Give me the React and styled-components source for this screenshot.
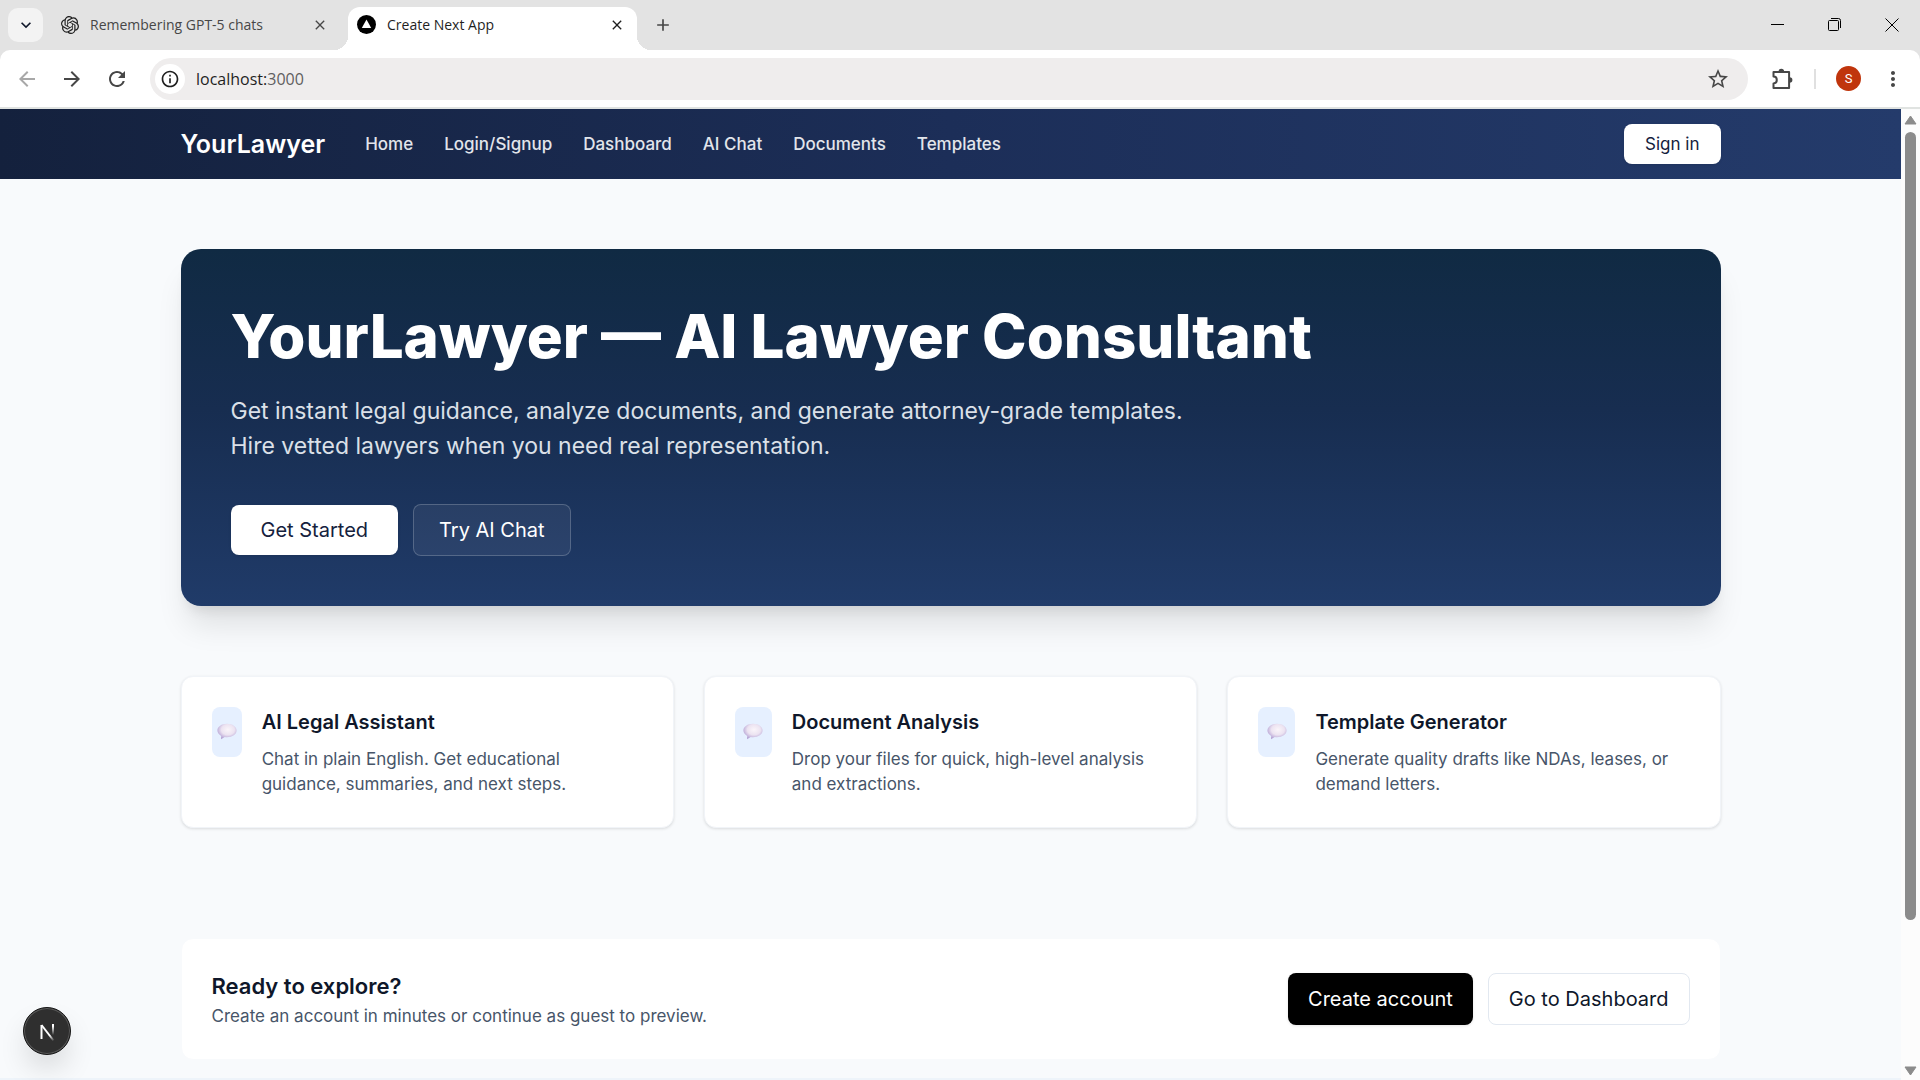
import React from "react";
import styled, { createGlobalStyle } from "styled-components";
import { SiOpenai } from "react-icons/si";
import {
  MdArrowBack,
  MdArrowForward,
  MdRefresh,
  MdInfoOutline,
  MdStarOutline,
  MdMoreVert,
  MdKeyboardArrowDown,
  MdClose,
  MdAdd,
} from "react-icons/md";

const GlobalStyle = createGlobalStyle`
  *, *::before, *::after {
    box-sizing: border-box;
  }

  body {
    margin: 0;
    font-family: Inter, "Liberation Sans", sans-serif;
    color: #0f172a;
  }

  h1, h2, h3, p {
    margin: 0;
  }

  button, input {
    font: inherit;
    color: inherit;
  }

  button {
    padding: 0;
    border: 0;
    background: none;
    cursor: pointer;
  }

  a {
    color: inherit;
    text-decoration: none;
  }
`;

const Browser = styled.div`
  height: 100vh;
  display: flex;
  flex-direction: column;
  overflow: hidden;
  background: #e3e3e3;
`;

/* ---------- browser chrome ---------- */

const TabStrip = styled.div`
  height: 50px;
  display: flex;
  align-items: center;
  padding-left: 8px;
  font-family: "Open Sans", "Noto Sans", sans-serif;
  font-size: 14px;
`;

const TabSearch = styled.button`
  width: 35px;
  height: 34px;
  display: flex;
  align-items: center;
  justify-content: center;
  border-radius: 10px;
  background: #f3f3f3;
`;

const Tab = styled.div`
  height: 43px;
  width: ${(props) => (props.$active ? 289 : 305)}px;
  display: flex;
  align-items: center;
  align-self: flex-end;
  gap: 11px;
  padding: ${(props) => (props.$active ? "0 12px 8px 9px" : "0 20px 8px 18px")};
  color: #474747;
  position: relative;

  ${(props) =>
    props.$active &&
    `
    color: #1f1f1f;
    background: white;
    border-radius: 12px 12px 0 0;

    &::before, &::after {
      content: "";
      position: absolute;
      bottom: 0;
      width: 14px;
      height: 14px;
    }
    &::before {
      right: 100%;
      background: radial-gradient(circle at 0 0, transparent 14px, white 14px);
    }
    &::after {
      left: 100%;
      background: radial-gradient(circle at 100% 0, transparent 14px, white 14px);
    }
  `}
`;

const TabTitle = styled.span`
  flex: 1;
  white-space: nowrap;
`;

const IconButton = styled.button`
  display: flex;
  align-items: center;
  justify-content: center;
  color: ${(props) => props.$color || "#474747"};
`;

const NewTab = styled(IconButton)`
  margin-left: 16px;
`;

const WindowControls = styled.div`
  margin-left: auto;
  height: 100%;
  display: flex;
`;

const WindowButton = styled(IconButton)`
  width: 57px;
  color: black;
`;

const Toolbar = styled.div`
  height: 59px;
  display: flex;
  align-items: center;
  padding: 0 15px;
  background: white;
  border-bottom: 2px solid #e0e3e1;
  border-radius: 10px 10px 0 0;
`;

const NavButtons = styled.div`
  display: flex;
  gap: 21px;
  margin-right: 21px;
`;

const AddressBar = styled.div`
  flex: 1;
  height: 42px;
  display: flex;
  align-items: center;
  padding: 0 18px 0 5px;
  border-radius: 21px;
  background: #efeded;
`;

const SiteInfo = styled(IconButton)`
  width: 30px;
  height: 30px;
  border-radius: 50%;
  background: white;
`;

const Url = styled.div`
  flex: 1;
  margin-left: 11px;
  font-family: "Open Sans", "Noto Sans", sans-serif;
  font-size: 16px;
  color: #1f1f1f;

  span {
    color: #5f5f5f;
  }
`;

const ToolbarEnd = styled.div`
  display: flex;
  align-items: center;
  margin-left: 23px;
`;

const Separator = styled.div`
  width: 2px;
  height: 20px;
  margin: 0 20px 0 21px;
  background: #e0e0e0;
`;

const Avatar = styled.button`
  width: 25px;
  height: 25px;
  margin-right: 20px;
  border-radius: 50%;
  background: #c0350c;
  color: white;
  font-family: Roboto, sans-serif;
  font-size: 13px;
`;

const Viewport = styled.div`
  flex: 1;
  min-height: 0;
  display: flex;
`;

const ScrollBar = styled.div`
  width: 19px;
  display: flex;
  flex-direction: column;
  align-items: center;
  justify-content: space-between;
  padding: 6px 0 4px;
  background: #fcfcfc;
`;

const ScrollTrack = styled.div`
  flex: 1;
  width: 11px;
  margin: 7px 0;
`;

const ScrollThumb = styled.div`
  height: 85%;
  border-radius: 6px;
  background: #8b8b8b;
`;

/* ---------- page ---------- */

const Page = styled.div`
  flex: 1;
  overflow: hidden;
  position: relative;
  background: #f8fafc;
`;

const Container = styled.div`
  max-width: 1600px;
  margin: 0 auto;
  padding: 0 30px;
`;

const Header = styled.header`
  background: linear-gradient(90deg, #14213d, #1c2e58 50%, #243b6b);
`;

const HeaderRow = styled(Container)`
  height: 70px;
  display: flex;
  align-items: center;
`;

const Brand = styled.a`
  margin-right: 40px;
  font-size: 25px;
  font-weight: 600;
  color: white;
`;

const NavLinks = styled.nav`
  display: flex;
  gap: 31px;
  font-size: 17px;
  font-weight: 500;
  color: #e2e5eb;
`;

const Button = styled.button`
  padding: ${(props) => (props.$small ? "0 21px" : "0 30px")};
  height: ${(props) => (props.$small ? 40 : 50)}px;
  border-radius: 8px;
  font-size: ${(props) => (props.$small ? 17 : 20)}px;
  background: white;
  color: #14213d;
  box-shadow: 0 1px 3px rgba(0, 0, 0, 0.1);
`;

const SignIn = styled(Button)`
  margin-left: auto;
`;

const GhostButton = styled(Button)`
  height: 52px;
  padding: 0 25px;
  border: 1px solid rgba(255, 255, 255, 0.2);
  background: rgba(255, 255, 255, 0.06);
  color: white;
  box-shadow: none;
`;

const DarkButton = styled(Button)`
  height: 52px;
  padding: 0 20px;
  background: black;
  color: white;
`;

const OutlineButton = styled(Button)`
  height: 52px;
  padding: 0 20px;
  border: 1px solid #e2e8f0;
  color: #0f172a;
  box-shadow: none;
`;

const Main = styled(Container)`
  padding-top: 70px;
  padding-bottom: 18px;
`;

const Hero = styled.section`
  padding: 50px;
  border-radius: 20px;
  background: linear-gradient(180deg, #102a43, #172d50 45%, #203b69);
  box-shadow: 0 25px 31px -6px rgba(0, 0, 0, 0.1),
    0 10px 13px -7px rgba(0, 0, 0, 0.1);
  color: white;
`;

const HeroTitle = styled.h1`
  font-size: 60px;
  line-height: 75px;
  font-weight: 800;
`;

const HeroText = styled.p`
  max-width: 960px;
  margin: 20px 0 40px;
  font-size: 23px;
  line-height: 35px;
  color: #dbe0e8;
`;

const Actions = styled.div`
  display: flex;
  align-items: center;
  gap: 15px;
`;

const Features = styled.section`
  display: grid;
  grid-template-columns: repeat(3, 1fr);
  gap: 30px;
  margin-top: 70px;
`;

const Card = styled.article`
  display: flex;
  align-items: flex-start;
  gap: 20px;
  padding: 30px;
  border: 1px solid #f1f4f8;
  border-radius: 12px;
  background: white;
  box-shadow: 0 1px 3px rgba(0, 0, 0, 0.12);
`;

const CardIcon = styled.div`
  width: 48px;
  height: 50px;
  min-width: 30px;
  display: flex;
  align-items: center;
  justify-content: center;
  border-radius: 8px;
  background: #e6f0ff;
`;

const CardTitle = styled.h3`
  font-size: 20px;
  line-height: 30px;
  font-weight: 600;
`;

const CardText = styled.p`
  margin-top: 10px;
  font-size: 17px;
  line-height: 25px;
  color: #475569;
`;

const Cta = styled.section`
  display: flex;
  align-items: center;
  justify-content: space-between;
  margin-top: 110px;
  padding: 30px;
  border: 1px solid #f8fafc;
  border-radius: 12px;
  background: white;
`;

const CtaTitle = styled.h2`
  font-size: 22px;
  line-height: 35px;
  font-weight: 600;
`;

const CtaText = styled.p`
  font-size: 17px;
  line-height: 25px;
  color: #475569;
`;

const Footer = styled.footer`
  height: 80px;
  background: #eef4fa;
`;

const DevBadge = styled.button`
  position: absolute;
  left: 23px;
  bottom: 25px;
  width: 48px;
  height: 48px;
  border-radius: 50%;
  background: #2f2f2f;
  border: 1px solid #171717;
  box-shadow: inset 0 0 0 1px #5a5a5a, 0 16px 32px -8px rgba(0, 0, 0, 0.24);
`;

const NextMark = () => (
  <svg width="19" height="19" viewBox="0 0 19 19">
    <circle cx="9.5" cy="9.5" r="9.5" fill="black" />
    <path d="M9.5 4.6 14.2 13H4.8Z" fill="white" />
  </svg>
);

const PuzzleIcon = () => (
  <svg width="22" height="22" viewBox="0 0 22 22" fill="none">
    <path
      d="M2.5 4h15.6v16H2.5v-4.6c2 0 3.3-1.4 3.3-3.4S4.5 8.6 2.5 8.6Z"
      stroke="#474747"
      strokeWidth="2"
      strokeLinejoin="round"
    />
    <path
      d="M7.5 3.5a2.8 2.8 0 0 1 5.6 0ZM18.6 9.2a2.8 2.8 0 0 1 0 5.6Z"
      fill="#474747"
    />
  </svg>
);

const BubbleIcon = () => (
  <svg width="20" height="18" viewBox="0 0 20 18">
    <defs>
      <radialGradient id="bubble" cx="0.55" cy="0.38" r="0.62">
        <stop offset="0" stopColor="#faf5fa" />
        <stop offset="0.55" stopColor="#ece3f1" />
        <stop offset="1" stopColor="#b3a0d3" />
      </radialGradient>
    </defs>
    <path
      d="M10 .8C4.600.8.4 3.700.4 7.500c0 2.200 1.500 4.200 3.800 5.400L4 16.200l3.800-2.200c.7.100 1.500.2 2.200.2 5.400 0 9.600-2.900 9.600-6.700S15.400.8 10 .8Z"
      fill="url(#bubble)"
    />
  </svg>
);

const features = [
  {
    title: "AI Legal Assistant",
    text: "Chat in plain English. Get educational guidance, summaries, and next steps.",
  },
  {
    title: "Document Analysis",
    text: "Drop your files for quick, high-level analysis and extractions.",
  },
  {
    title: "Template Generator",
    text: "Generate quality drafts like NDAs, leases, or demand letters.",
  },
];

const links = [
  "Home",
  "Login/Signup",
  "Dashboard",
  "AI Chat",
  "Documents",
  "Templates",
];

function BrowserChrome() {
  return (
    <>
      <TabStrip>
        <TabSearch aria-label="Search tabs">
          <MdKeyboardArrowDown size={20} />
        </TabSearch>
        <Tab>
          <SiOpenai size={18} color="#1f1f1f" />
          <TabTitle>Remembering GPT-5 chats</TabTitle>
          <IconButton aria-label="Close tab">
            <MdClose size={16} />
          </IconButton>
        </Tab>
        <Tab $active>
          <NextMark />
          <TabTitle>Create Next App</TabTitle>
          <IconButton aria-label="Close tab" $color="#1f1f1f">
            <MdClose size={16} />
          </IconButton>
        </Tab>
        <NewTab aria-label="New tab">
          <MdAdd size={20} />
        </NewTab>
        <WindowControls>
          <WindowButton aria-label="Minimize">
            <svg width="13" height="13" viewBox="0 0 13 13">
              <path d="M0 5.5h13" stroke="black" />
            </svg>
          </WindowButton>
          <WindowButton aria-label="Restore">
            <svg width="14" height="14" viewBox="0 0 14 14" fill="none">
              <rect x="0.5" y="2.5" width="10" height="10" rx="1" stroke="black" />
              <path d="M3 .5h7.5a2 2 0 0 1 2 2V10" stroke="black" />
            </svg>
          </WindowButton>
          <WindowButton aria-label="Close window">
            <svg width="14" height="14" viewBox="0 0 14 14">
              <path d="m.5.5 13 13m0-13-13 13" stroke="black" />
            </svg>
          </WindowButton>
        </WindowControls>
      </TabStrip>
      <Toolbar>
        <NavButtons>
          <IconButton aria-label="Back" $color="#a8a8a8">
            <MdArrowBack size={24} />
          </IconButton>
          <IconButton aria-label="Forward">
            <MdArrowForward size={24} />
          </IconButton>
          <IconButton aria-label="Reload">
            <MdRefresh size={24} />
          </IconButton>
        </NavButtons>
        <AddressBar>
          <SiteInfo aria-label="Site information" $color="#1f1f1f">
            <MdInfoOutline size={20} />
          </SiteInfo>
          <Url>
            localhost:<span>3000</span>
          </Url>
          <IconButton aria-label="Bookmark">
            <MdStarOutline size={24} />
          </IconButton>
        </AddressBar>
        <ToolbarEnd>
          <IconButton aria-label="Extensions">
            <PuzzleIcon />
          </IconButton>
          <Separator />
          <Avatar>S</Avatar>
          <IconButton aria-label="Menu">
            <MdMoreVert size={24} />
          </IconButton>
        </ToolbarEnd>
      </Toolbar>
    </>
  );
}

export default function App() {
  return (
    <Browser>
      <GlobalStyle />
      <BrowserChrome />
      <Viewport>
        <Page>
          <Header>
            <HeaderRow>
              <Brand href="#home">YourLawyer</Brand>
              <NavLinks>
                {links.map((link) => (
                  <a key={link} href={`#${link}`}>
                    {link}
                  </a>
                ))}
              </NavLinks>
              <SignIn $small>Sign in</SignIn>
            </HeaderRow>
          </Header>
          <Main as="main">
            <Hero>
              <HeroTitle>YourLawyer — AI Lawyer Consultant</HeroTitle>
              <HeroText>
                Get instant legal guidance, analyze documents, and generate
                attorney-grade templates. Hire vetted lawyers when you need real
                representation.
              </HeroText>
              <Actions>
                <Button>Get Started</Button>
                <GhostButton>Try AI Chat</GhostButton>
              </Actions>
            </Hero>
            <Features>
              {features.map((feature) => (
                <Card key={feature.title}>
                  <CardIcon>
                    <BubbleIcon />
                  </CardIcon>
                  <div>
                    <CardTitle>{feature.title}</CardTitle>
                    <CardText>{feature.text}</CardText>
                  </div>
                </Card>
              ))}
            </Features>
            <Cta>
              <div>
                <CtaTitle>Ready to explore?</CtaTitle>
                <CtaText>
                  Create an account in minutes or continue as guest to preview.
                </CtaText>
              </div>
              <Actions>
                <DarkButton>Create account</DarkButton>
                <OutlineButton>Go to Dashboard</OutlineButton>
              </Actions>
            </Cta>
          </Main>
          <Footer />
          <DevBadge aria-label="Open Next.js Dev Tools">
            <svg width="46" height="46" viewBox="0 0 46 46" fill="none">
              <defs>
                <linearGradient
                  id="diagonalFade"
                  gradientUnits="userSpaceOnUse"
                  x1="24"
                  y1="25"
                  x2="30"
                  y2="33"
                >
                  <stop offset="0.3" stopColor="white" />
                  <stop offset="1" stopColor="white" stopOpacity="0" />
                </linearGradient>
                <linearGradient
                  id="stemFade"
                  gradientUnits="userSpaceOnUse"
                  x1="0"
                  y1="16"
                  x2="0"
                  y2="27"
                >
                  <stop offset="0.2" stopColor="white" />
                  <stop offset="1" stopColor="white" stopOpacity="0" />
                </linearGradient>
              </defs>
              <path d="M17.500 31V17" stroke="white" strokeWidth="2" />
              <path d="M17.500 17 29.500 32.500" stroke="url(#diagonalFade)" strokeWidth="2" />
              <path d="M29 16v11" stroke="url(#stemFade)" strokeWidth="2" />
            </svg>
          </DevBadge>
        </Page>
        <ScrollBar>
          <svg width="13" height="10" viewBox="0 0 13 10">
            <path d="M6.500 1 12 9H1Z" fill="#8b8b8b" stroke="#8b8b8b" strokeLinejoin="round" />
          </svg>
          <ScrollTrack>
            <ScrollThumb />
          </ScrollTrack>
          <svg width="13" height="10" viewBox="0 0 13 10">
            <path d="M6.500 9 12 1H1Z" fill="#8b8b8b" stroke="#8b8b8b" strokeLinejoin="round" />
          </svg>
        </ScrollBar>
      </Viewport>
    </Browser>
  );
}
